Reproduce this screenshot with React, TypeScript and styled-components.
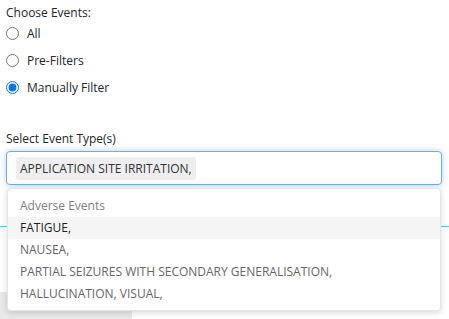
import React from "react";
import styled, { createGlobalStyle } from "styled-components";

const Global = createGlobalStyle`
  html, body { margin: 0; padding: 0; background: #fff; }
  body { font-family: "Open Sans", "Noto Sans", sans-serif; font-size: 12px; color: #333; overflow: hidden; }
`;

const Page = styled.div`
  width: 449px;
  height: 319px;
  position: relative;
  overflow: hidden;
`;

const Form = styled.div`
  padding: 4px 7px 0 6px;
  display: flex;
  flex-direction: column;
`;

const Label = styled.div`
  font-size: 12px;
  line-height: 17px;
  color: #212529;
`;

const RadioGroup = styled.div`
  display: flex;
  flex-direction: column;
  gap: 10px;
  margin-top: 4px;
`;

const RadioRow = styled.label`
  display: flex;
  align-items: center;
  gap: 8px;
  height: 17px;
  font-size: 12px;
  color: #212529;
`;

const Radio = styled.input`
  margin: 0;
  width: 13px;
  height: 13px;
`;

const Section = styled.div`
  margin-top: 34px;
  display: flex;
  flex-direction: column;
  gap: 4px;
`;

const SelectWrap = styled.div`
  position: relative;
`;

const InputBox = styled.div`
  height: 34px;
  box-sizing: border-box;
  border: 1px solid #66afe9;
  border-radius: 4px;
  box-shadow: 0 0 6px rgba(102, 175, 233, 0.55);
  padding: 4px 9px;
  display: flex;
  align-items: center;
  background: #fff;
`;

const Tag = styled.span`
  background: #eeeeee;
  border-radius: 3px;
  padding: 0 4px;
  height: 23px;
  line-height: 23px;
  font-size: 12px;
  color: #333;
`;

const Dropdown = styled.div`
  position: absolute;
  left: 1px;
  right: 1px;
  top: calc(100% + 3px);
  background: #fff;
  border-radius: 4px;
  border: 1px solid #e6e6e6;
  box-shadow: 0 2px 6px rgba(0, 0, 0, 0.15);
  padding: 6px 0 5px;
  z-index: 2;
`;

const GroupHeader = styled.div`
  height: 22px;
  line-height: 22px;
  padding-left: 12px;
  color: #808080;
  font-size: 12px;
`;

const Option = styled.div<{ $active?: boolean }>`
  height: 22px;
  line-height: 22px;
  padding-left: 12px;
  font-size: 12px;
  color: ${(p) => (p.$active ? "#222" : "#666")};
  background: ${(p) => (p.$active ? "#f5f5f5" : "transparent")};
`;

const TabLine = styled.div`
  margin: 41px -7px 0 -6px;
  border-bottom: 1px solid #6fc3de;
`;

const GrayBlock = styled.div`
  margin: 65px 0 0 -6px;
  width: 132px;
  height: 40px;
  background: #e8e8e8;
`;

const options = [
  "FATIGUE,",
  "NAUSEA,",
  "PARTIAL SEIZURES WITH SECONDARY GENERALISATION,",
  "HALLUCINATION, VISUAL,",
];

export default function App() {
  return (
    <Page>
      <Global />
      <Form>
        <Label>Choose Events:</Label>
        <RadioGroup>
          <RadioRow>
            <Radio type="radio" name="ev" />
            All
          </RadioRow>
          <RadioRow>
            <Radio type="radio" name="ev" />
            Pre-Filters
          </RadioRow>
          <RadioRow>
            <Radio type="radio" name="ev" defaultChecked />
            Manually Filter
          </RadioRow>
        </RadioGroup>
        <Section>
          <Label>Select Event Type(s)</Label>
          <SelectWrap>
            <InputBox>
              <Tag>APPLICATION SITE IRRITATION,</Tag>
            </InputBox>
            <Dropdown>
              <GroupHeader>Adverse Events</GroupHeader>
              {options.map((o, i) => (
                <Option key={o} $active={i === 0}>
                  {o}
                </Option>
              ))}
            </Dropdown>
          </SelectWrap>
        </Section>
        <TabLine />
        <GrayBlock />
      </Form>
    </Page>
  );
}
